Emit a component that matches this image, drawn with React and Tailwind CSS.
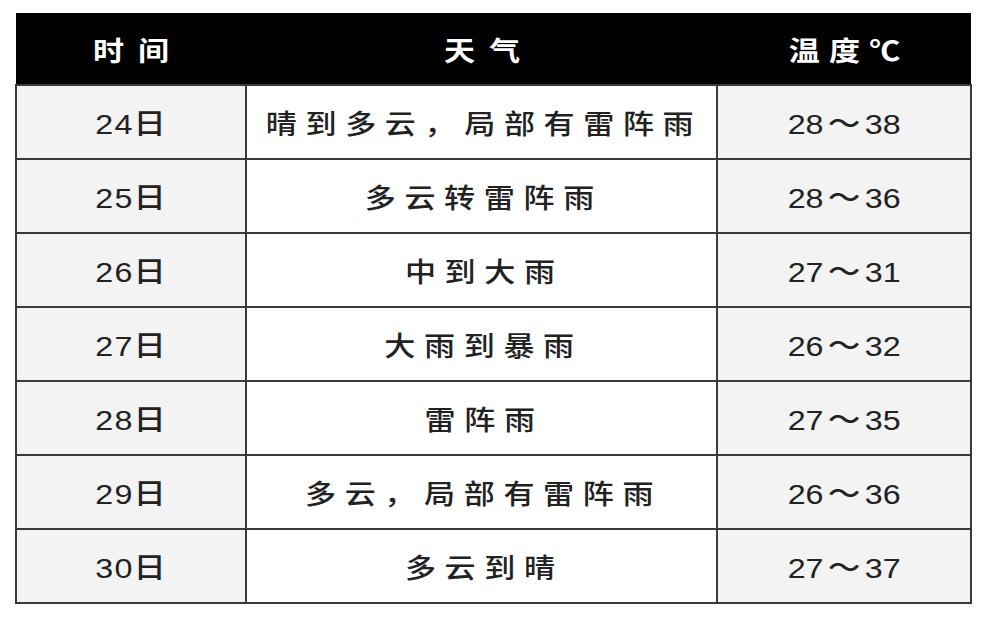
const rows = [
  ["24日", "晴到多云，局部有雷阵雨", "28～38"],
  ["25日", "多云转雷阵雨", "28～36"],
  ["26日", "中到大雨", "27～31"],
  ["27日", "大雨到暴雨", "26～32"],
  ["28日", "雷阵雨", "27～35"],
  ["29日", "多云，局部有雷阵雨", "26～36"],
  ["30日", "多云到晴", "27～37"],
]

// the source picture is a bit wide, so text is stretched sideways
function Wide({ children, className = "" }) {
  return <span className={"inline-block scale-x-[1.15] " + className}>{children}</span>
}

function Range({ value }) {
  const [lo, hi] = value.split("～")
  return (
    <Wide>
      {lo}
      <span className="mx-[4px]">～</span>
      {hi}
    </Wide>
  )
}

export default function App() {
  return (
    <div className="w-[985px] h-[617px] bg-white pt-[13px] pl-[15px] font-['Liberation_Sans','Noto_Sans_CJK_SC',sans-serif]">
      <table className="border-collapse table-fixed w-[955px] text-[#222]">
        <colgroup>
          <col className="w-[230px]" />
          <col className="w-[471px]" />
          <col className="w-[254px]" />
        </colgroup>
        <thead>
          <tr className="h-[72px] bg-black text-white text-[27px]">
            <th className="font-bold pt-[7px]">
              <Wide className="tracking-[12px] pl-[12px]">时间</Wide>
            </th>
            <th className="font-bold pt-[7px]">
              <Wide className="tracking-[12px] pl-[12px]">天气</Wide>
            </th>
            <th className="font-bold pt-[7px]">
              <Wide className="tracking-[8px] pl-[8px]">温度℃</Wide>
            </th>
          </tr>
        </thead>
        <tbody>
          {rows.map((r) => (
            <tr key={r[0]} className="h-[74px] font-medium">
              <td className="border-2 border-[#3a3a3a] bg-[#f3f3f3] text-center text-[28px] pt-[6px]">
                <Wide className="tracking-[1px]">{r[0]}</Wide>
              </td>
              <td className="border-2 border-[#3a3a3a] bg-white text-center text-[27px] pt-[6px]">
                <Wide className="tracking-[7.5px] pl-[4px]">{r[1]}</Wide>
              </td>
              <td className="border-2 border-[#3a3a3a] bg-[#f3f3f3] text-center text-[28px] pt-[6px]">
                <Range value={r[2]} />
              </td>
            </tr>
          ))}
        </tbody>
      </table>
    </div>
  )
}
